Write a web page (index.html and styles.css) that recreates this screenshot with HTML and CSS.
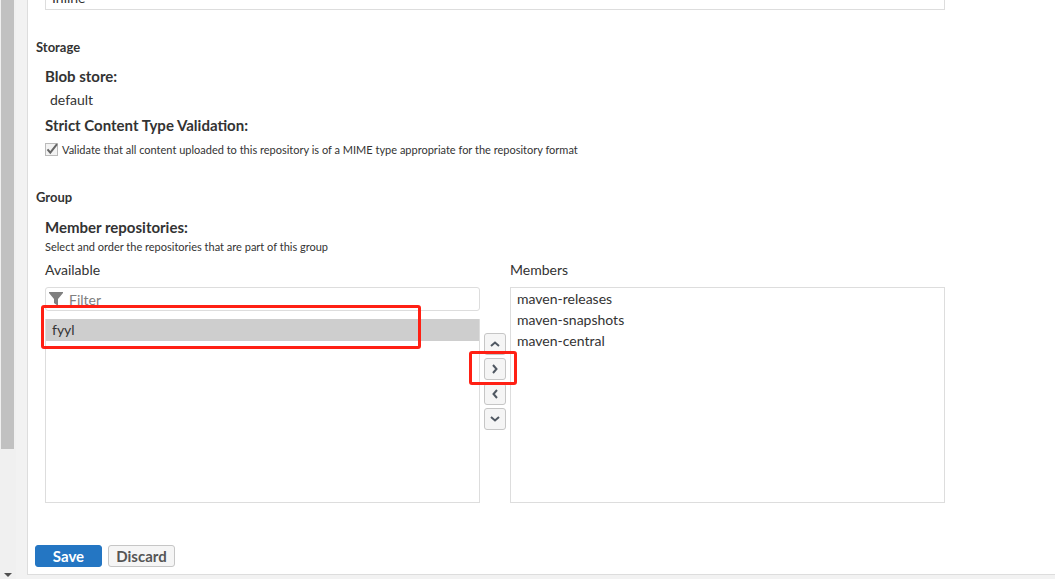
FILE: index.html
```html
<!DOCTYPE html>
<html lang="en">
<head>
<meta charset="utf-8">
<title>Repository settings</title>
<link rel="stylesheet" href="styles.css">
</head>
<body>
<div class="page">
  <div class="scrollbar" aria-hidden="true">
    <div class="scroll-thumb"></div>
    <svg class="scroll-arrow" width="8" height="4" viewBox="0 0 8 4"><path d="M0 0h8L4 4z" fill="#505050"/></svg>
  </div>
  <main class="panel">
    <form class="form">
      <div class="clipped-field">
        <input class="text-box" type="text" value="Inline" aria-label="Content disposition">
      </div>

      <section class="group">
        <h2 class="group-title">Storage</h2>
        <div class="fields">
          <h3 class="field-label">Blob store:</h3>
          <p class="field-value">default</p>
          <h3 class="field-label strict">Strict Content Type Validation:</h3>
          <label class="check">
            <input class="check-box" type="checkbox" checked>
            <svg class="check-mark" width="13" height="13" viewBox="0 0 13 13"><path d="M2.5 6.3l2.8 3.4L12 1.2" fill="none" stroke="#666" stroke-width="2"/></svg>
            <span>Validate that all content uploaded to this repository is of a MIME type appropriate for the repository format</span>
          </label>
        </div>
      </section>

      <section class="group members-group">
        <h2 class="group-title">Group</h2>
        <div class="fields">
          <h3 class="field-label">Member repositories:</h3>
          <p class="hint">Select and order the repositories that are part of this group</p>
          <div class="selector">
            <div class="column">
              <label class="column-label" for="filter">Available</label>
              <div class="filter">
                <svg class="funnel" width="14" height="14" viewBox="0 0 14 14"><path d="M0 0h14v1L9 7v7L5 11V7L0 1z" fill="#808080"/></svg>
                <input class="filter-input" id="filter" type="text" placeholder="Filter">
              </div>
              <div class="marked">
                <ul class="list available">
                  <li class="item selected">fyyl</li>
                </ul>
                <span class="mark mark-row"></span>
              </div>
            </div>
            <div class="moves">
              <button class="move" type="button" aria-label="Move up"><svg width="10" height="10" viewBox="0 0 10 10"><path d="M1 7l4-3.5L9 7"/></svg></button>
              <div class="marked">
                <button class="move" type="button" aria-label="Add"><svg width="10" height="10" viewBox="0 0 10 10"><path d="M3 1l3.5 4L3 9"/></svg></button>
                <span class="mark mark-button"></span>
              </div>
              <button class="move" type="button" aria-label="Remove"><svg width="10" height="10" viewBox="0 0 10 10"><path d="M7 1L3.5 5 7 9"/></svg></button>
              <button class="move" type="button" aria-label="Move down"><svg width="10" height="10" viewBox="0 0 10 10"><path d="M1 3l4 3.5L9 3"/></svg></button>
            </div>
            <div class="column">
              <span class="column-label">Members</span>
              <ul class="list members">
                <li class="item">maven-releases</li>
                <li class="item">maven-snapshots</li>
                <li class="item">maven-central</li>
              </ul>
            </div>
          </div>
        </div>
      </section>

      <div class="actions">
        <button class="button primary" type="button">Save</button>
        <button class="button" type="button">Discard</button>
      </div>
    </form>
  </main>
</div>
</body>
</html>
```
FILE: styles.css
```css
* { box-sizing: border-box; }
body {
  margin: 0;
  background: #f2f2f2;
  color: #333;
  font: 14px/21px Lato, "Liberation Sans", sans-serif;
}
h2, h3, p, ul { margin: 0; padding: 0; }
input, button { font: inherit; color: inherit; }

.page { display: flex; min-height: 100vh; }
.scrollbar {
  flex: none;
  display: flex;
  flex-direction: column;
  justify-content: space-between;
  width: 16px;
  padding: 0 2px 2px 1px;
  background: #f0f0f0;
}
.scroll-thumb { height: 449px; background: #c1c1c1; }
.scroll-arrow { margin-left: 3px; }
.panel {
  flex: 1;
  min-width: 0;
  margin: 0 0 4px 11px;
  padding: 0 8px;
  background: #fff;
  border-left: 1px solid #ddd;
  border-bottom: 1px solid #ddd;
}
.form { max-width: 909px; padding-bottom: 7px; }

.clipped-field {
  display: flex;
  align-items: flex-end;
  height: 10px;
  margin-left: 9px;
  overflow: hidden;
}
.text-box {
  flex: 1;
  height: 24px;
  padding: 0 6px 1px;
  border: 1px solid #ddd;
  background: #fff;
}

.group { padding-top: 29px; }
.members-group { padding-top: 30px; }
.group-title { font-size: 13px; line-height: 16px; font-weight: 700; }
.fields { padding: 11px 0 0 9px; }
.members-group .fields { padding-top: 12px; }
.field-label { font-size: 15px; line-height: 21px; font-weight: 700; }
.field-value { padding: 2px 5px 5px; }
.strict { padding-bottom: 4px; }
.check {
  position: relative;
  display: flex;
  align-items: center;
  gap: 4px;
  height: 19px;
  font-size: 11px;
}
.check-box {
  appearance: none;
  flex: none;
  width: 13px;
  height: 13px;
  margin: 0;
  border: 1px solid #bbb;
  background: #f3f3f3;
}
.check-mark { position: absolute; left: 0; top: 3px; }
.hint { padding: 1px 0 4px; font-size: 11px; line-height: 16px; }

.selector { display: grid; grid-template-columns: 1fr 22px 1fr; gap: 4px; }
.column { display: flex; flex-direction: column; }
.column-label { height: 28px; }
.filter {
  display: flex;
  align-items: center;
  height: 24px;
  margin-bottom: 8px;
  padding-left: 3px;
  border: 1px solid #ddd;
  border-radius: 3px;
}
.funnel { flex: none; }
.filter-input {
  flex: 1;
  min-width: 0;
  padding: 0 6px;
  border: 0;
  background: none;
  outline: 0;
}
.filter-input::placeholder { color: #808080; }
.list { border: 1px solid #ddd; list-style: none; }
.available { height: 184px; border-top: 0; }
.members { height: 216px; }
.item { padding: 0 6px; line-height: 21px; }
.selected { background: #cecece; line-height: 22px; }

.moves { display: flex; flex-direction: column; gap: 3px; align-self: center; }
.move {
  display: flex;
  align-items: center;
  justify-content: center;
  width: 22px;
  height: 22px;
  padding: 0;
  border: 1px solid #c6c6c6;
  border-radius: 3px;
  background: #f5f5f5;
}
.move path { fill: none; stroke: #505862; stroke-width: 2; }

.marked { position: relative; }
.mark {
  position: absolute;
  border: 3px solid #ff2014;
  border-radius: 3px;
  pointer-events: none;
}
.mark-row { top: -14px; left: -4px; width: 380px; height: 44px; }
.mark-button { top: -7px; left: -15px; width: 48px; height: 34px; }

.actions { display: flex; gap: 6px; margin: 42px 0 0 -1px; }
.button {
  width: 67px;
  height: 22px;
  padding: 0;
  border: 1px solid #c6c6c6;
  border-radius: 3px;
  background: #f5f5f5;
  color: #555;
  font-size: 15px;
  font-weight: 700;
  line-height: 18px;
}
.primary { border-color: #2476c3; background: #2476c3; color: #fff; }
```
